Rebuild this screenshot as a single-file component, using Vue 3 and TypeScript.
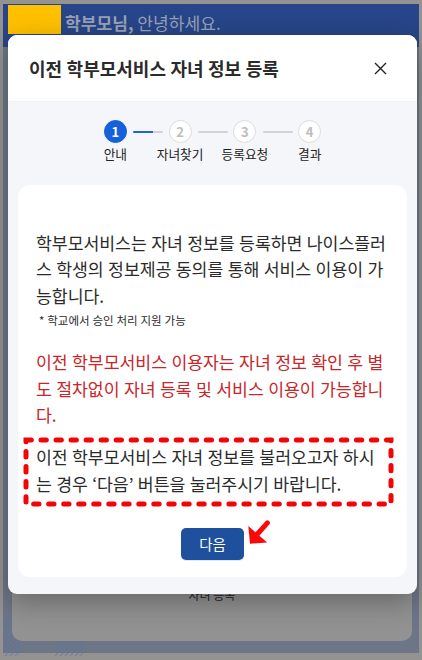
<script setup lang="ts">
interface Step { no: number; label: string }
const steps: Step[] = [
  { no: 1, label: '안내' },
  { no: 2, label: '자녀찾기' },
  { no: 3, label: '등록요청' },
  { no: 4, label: '결과' },
]
const intro: string[] = ['학부모서비스는 자녀 정보를 등록하면 나이스플러', '스 학생의 정보제공 동의를 통해 서비스 이용이 가', '능합니다.']
const notice: string[] = ['이전 학부모서비스 이용자는 자녀 정보 확인 후 별', '도 절차없이 자녀 등록 및 서비스 이용이 가능합니', '다.']
const guide: string[] = ['이전 학부모서비스 자녀 정보를 불러오고자 하시', '는 경우 ‘다음’ 버튼을 눌러주시기 바랍니다.']
</script>

<template>
  <div class="screen">
    <div class="page">
      <header class="greeting"><span class="mask"></span><p><b>학부모님,</b> 안녕하세요.</p></header>
      <main class="backdrop">
        <section class="panel"><span>자녀 등록</span></section>
      </main>
      <svg class="stripes" width="90" height="44" viewBox="0 0 90 44">
        <defs>
          <pattern id="hatch" width="5" height="5" patternUnits="userSpaceOnUse">
            <path d="M-1 1L1-1M0 5L5 0M4 6L6 4" stroke="#56719f" stroke-width="1.3" opacity=".5" />
          </pattern>
        </defs>
        <path d="M0 8L9 0V24L12 28H17V43H0ZM52 28H80V43H52Z" fill="url(#hatch)" />
      </svg>
    </div>

    <div class="modal" role="dialog">
      <header class="title-bar">
        <h1>이전 학부모서비스 자녀 정보 등록</h1>
        <button class="close" aria-label="닫기">
          <svg width="13" height="13" viewBox="0 0 13 13"><path d="M1 1L12 12M12 1L1 12" stroke="#222" stroke-width="1.4" fill="none" /></svg>
        </button>
      </header>
      <div class="body">
        <ol class="steps">
          <li v-for="s in steps" :key="s.no" :class="{ active: s.no === 1 }">
            <span class="dot">{{ s.no }}</span>
            <span class="label">{{ s.label }}</span>
          </li>
        </ol>
        <section class="card">
          <p class="copy"><span v-for="t in intro" :key="t">{{ t }}</span></p>
          <p class="small">* 학교에서 승인 처리 지원 가능</p>
          <p class="copy notice"><span v-for="t in notice" :key="t">{{ t }}</span></p>
          <p class="copy guide"><span v-for="t in guide" :key="t">{{ t }}</span></p>
          <button class="next">다음</button>
        </section>
      </div>
    </div>

    <svg class="marks" width="422" height="660" viewBox="0 0 422 660">
      <rect x="26" y="440" width="365" height="64" fill="none" stroke="#f30505" stroke-width="5" stroke-linecap="round" stroke-dasharray="5.3 9.72" />
      <path d="M248.3 526L267.2 542.4L250 543.8Z" fill="#fb0808" />
      <path d="M257 534.5L267.4 522.8" stroke="#fb0808" stroke-width="5" stroke-linecap="round" />
    </svg>
  </div>
</template>

<style>
body { margin: 0; }
</style>

<style scoped>
.screen { position: relative; width: 422px; height: 660px; overflow: hidden; background: #949392; font-family: "Noto Sans CJK KR", sans-serif; color: #2b2b2b; }
p, h1, ol { margin: 0; padding: 0; }
button { font-family: inherit; border: 0; padding: 0; }
.page { position: relative; display: flex; flex-direction: column; height: 660px; box-sizing: border-box; padding: 4px 3px 7px; }
.greeting { flex: none; height: 43px; display: flex; background: #274588; box-sizing: border-box; padding: 1px 0 0 5px; }
.mask { width: 53px; height: 29px; background: #ffc000; }
.greeting p { margin-left: 4px; padding-top: 5px; font-size: 17.1px; line-height: 26px; color: #98a1b6; white-space: nowrap; }
.backdrop { flex: 1; display: flex; background: #6d7687; padding: 0 7px 12px 9px; }
.panel { flex: 1; display: flex; align-items: flex-end; justify-content: center; background: #929292; border-radius: 0 0 10px 10px; }
.panel span { font-size: 12px; line-height: 18px; color: #222; padding-bottom: 37px; }
.stripes { position: absolute; left: 3px; top: 613px; }

.modal { position: absolute; left: 8px; top: 35px; width: 409px; height: 559px; display: flex; flex-direction: column; background: #f5f6f9; border-radius: 9px; overflow: hidden; box-shadow: 0 8px 28px rgba(0, 0, 0, .3); }
.title-bar { flex: none; height: 67px; box-sizing: border-box; display: flex; align-items: center; justify-content: space-between; padding: 0 30px 0 21px; background: #fff; border-bottom: 1px solid #eff1f4; }
h1 { font-size: 18px; line-height: 27px; font-weight: 700; word-spacing: .4px; white-space: nowrap; }
.close { display: flex; background: none; }
.body { flex: 1; display: flex; flex-direction: column; padding: 18px 10px 17px; }
.steps { display: flex; justify-content: center; list-style: none; height: 65px; }
.steps li { position: relative; width: 64.8px; display: flex; flex-direction: column; align-items: center; }
.dot { width: 23px; height: 23px; box-sizing: border-box; border: 1px solid #dcdcdc; border-radius: 50%; background: #fff; color: #bdbdbd; font-size: 13px; font-weight: 700; line-height: 21px; text-align: center; }
.active .dot { background: #1560db; border-color: #1560db; color: #fff; }
.label { font-size: 12.7px; line-height: 18px; margin-top: 2px; color: #222; white-space: nowrap; }
.steps li:not(:last-child)::after { content: ""; position: absolute; left: 50px; top: 10.5px; width: 30px; height: 2px; border-radius: 1px; background: #d2d3d6; }
.steps li.active::after { background: linear-gradient(90deg, #1e66d0 66%, #d2d3d6 66%); }
.card { flex: 1; display: flex; flex-direction: column; align-items: flex-start; box-sizing: border-box; padding: 45px 18px 0; background: #fff; border-radius: 12px; }
.copy { display: flex; flex-direction: column; font-size: 17.25px; letter-spacing: -.05px; word-spacing: .6px; line-height: 26.3px; white-space: nowrap; }
.small { font-size: 11.5px; word-spacing: .3px; line-height: 17px; padding: 3px 0 0 3px; }
.notice { margin-top: 20.5px; color: #c8262b; }
.guide { margin-top: 16px; }
.next { align-self: center; margin-top: 31.5px; width: 63px; height: 32px; border-radius: 5px; background: #1f509e; color: #fff; font-size: 14.5px; line-height: 32px; box-shadow: 0 1px 0 #dce9fa; }
.marks { position: absolute; left: 0; top: 0; pointer-events: none; }
</style>
